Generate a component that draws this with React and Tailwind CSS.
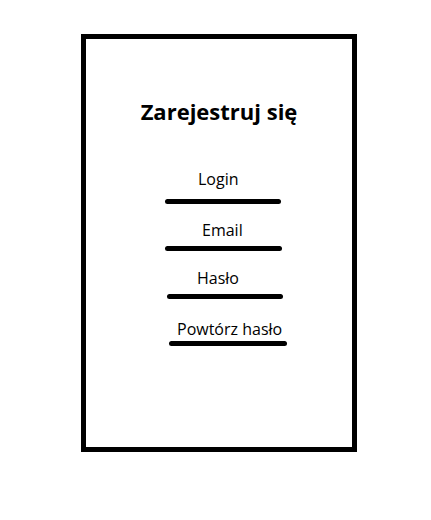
const fields = [
  { label: 'Login', textClass: 'mt-[49px] ml-[112px]', lineClass: 'mt-[12px] ml-[79px] w-[116px]' },
  { label: 'Email', textClass: 'mt-[18px] ml-[116px]', lineClass: 'mt-[8px] ml-[79px] w-[117px]' },
  { label: 'Hasło', textClass: 'mt-[19px] ml-[111px]', lineClass: 'mt-[8px] ml-[81px] w-[116px]' },
  { label: 'Powtórz hasło', textClass: 'mt-[22px] ml-[91px]', lineClass: 'mt-[4px] ml-[83px] w-[118px]' },
];

const App = () => {
  return (
    <div className="w-[431px] h-[520px] bg-white pt-[34px] pl-[81px] font-['Open_Sans',sans-serif] text-black">
      <div className="w-[276px] h-[418px] border-[5px] border-black flex flex-col">
        <h1 className="mt-[61px] text-center text-[22px] leading-none font-bold">Zarejestruj się</h1>

        {fields.map((f) => (
          <div key={f.label} className="flex flex-col">
            <span className={`${f.textClass} text-[16px] leading-none`}>{f.label}</span>
            <div className={`${f.lineClass} h-[5px] rounded-full bg-black`} />
          </div>
        ))}
      </div>
    </div>
  );
};

export default App;
